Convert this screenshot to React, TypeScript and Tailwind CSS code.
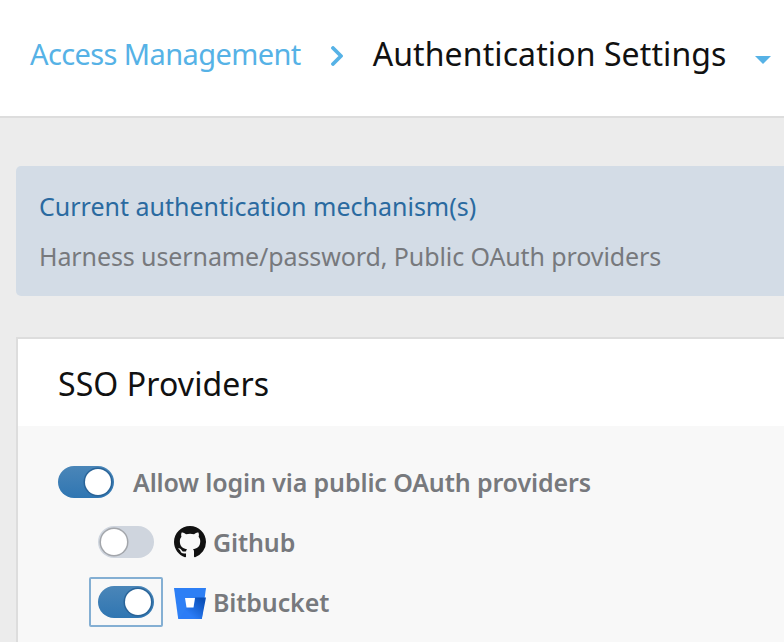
import React from 'react';

const Toggle = ({ on }: { on: boolean }) => (
  <div
    className={`relative h-[32px] w-[56px] shrink-0 rounded-full ${
      on ? 'bg-gradient-to-b from-[#4a86b8] to-[#2f76b2]' : 'bg-[#cfd5de]'
    }`}
  >
    <div
      className={`absolute top-[3px] h-[26px] w-[26px] rounded-full bg-white ${
        on ? 'right-[3px] shadow-[0_0_0_1.5px_#2a6498]' : 'left-[3px] shadow-[0_0_0_1.5px_#a3a6ab]'
      }`}
    />
  </div>
);

const GithubMark = () => (
  <svg viewBox="0 0 16 16" className="h-[32px] w-[32px] shrink-0" fill="#111111">
    <path d="M8 0C3.58 0 0 3.58 0 8c0 3.54 2.29 6.53 5.47 7.59.4.07.55-.17.55-.38 0-.19-.01-.82-.01-1.49-2.01.37-2.53-.49-2.69-.94-.09-.23-.48-.94-.82-1.13-.28-.15-.68-.52-.01-.53.63-.01 1.08.58 1.23.82.72 1.21 1.87.87 2.33.66.07-.52.28-.87.51-1.07-1.78-.2-3.64-.89-3.64-3.95 0-.87.31-1.59.82-2.15-.08-.2-.36-1.02.08-2.12 0 0 .67-.21 2.2.82.64-.18 1.32-.27 2-.27s1.36.09 2 .27c1.53-1.04 2.2-.82 2.2-.82.44 1.1.16 1.92.08 2.12.51.56.82 1.27.82 2.15 0 3.07-1.87 3.75-3.65 3.95.29.25.54.73.54 1.48 0 1.07-.01 1.93-.01 2.2 0 .21.15.46.55.38A8.01 8.01 0 0 0 16 8c0-4.42-3.58-8-8-8z" />
  </svg>
);

const BitbucketMark = () => (
  <svg viewBox="0 0 32 31" className="mt-[3px] h-[31px] w-[32px] shrink-0">
    <defs>
      <linearGradient id="bb" x1="1" y1="0.25" x2="0.4" y2="0.8">
        <stop offset="0" stopColor="#0a4fb8" />
        <stop offset="1" stopColor="#2b7cf6" />
      </linearGradient>
    </defs>
    <path d="M0 0h32l-4.2 31H4.2z" fill="#2d7ff5" />
    <path d="M32 9.5H21l-1.5 10h-7L5 31h22.8z" fill="url(#bb)" />
    <path d="M11 10h10l-1.5 9.5h-7z" fill="#ffffff" />
  </svg>
);

const App: React.FC = () => {
  return (
    <div className="h-[642px] w-[784px] overflow-hidden bg-[#ececec] font-['Noto_Sans',sans-serif]">
      {/* Header */}
      <header className="flex h-[118px] items-center border-b-2 border-[#dddddd] bg-white pb-[8px] pl-[30px]">
        <span className="text-[29px] tracking-[-0.6px] text-[#56b2e6]">Access Management</span>
        <svg viewBox="0 0 12 20" className="ml-[30px] mt-[4px] h-[20px] w-[12px]" fill="none" stroke="#56b2e6" strokeWidth="3.8" strokeLinecap="round" strokeLinejoin="round">
          <path d="M2 2l8 8-8 8" />
        </svg>
        <span className="ml-[30px] text-[32px] tracking-[0.1px] text-[#111111]">Authentication Settings</span>
        <div className="ml-[28px] mt-[12px] h-0 w-0 border-x-[8px] border-t-[8px] border-x-transparent border-t-[#56b2e6]" />
      </header>

      <main className="pl-[16px] pt-[48px]">
        {/* Banner */}
        <div className="flex h-[130px] flex-col rounded-l-[5px] bg-[#d3dce6] pl-[23px] pt-[22px]">
          <div className="text-[25px] leading-[36px] tracking-[0px] text-[#2a6aa0]">Current authentication mechanism(s)</div>
          <div className="mt-[14px] text-[25px] leading-[36px] tracking-[-0.1px] text-[#77797d]">
            Harness username/password, Public OAuth providers
          </div>
        </div>

        {/* SSO card */}
        <section className="mt-[41px] h-[400px] border-l-2 border-t-2 border-[#dddddd] bg-[#f8f8f8]">
          <div className="flex h-[87px] items-center bg-white pl-[40px]">
            <h2 className="pt-[2px] text-[32px] tracking-[0.1px] text-[#111111]">SSO Providers</h2>
          </div>
          <div className="flex flex-col pl-[40px] pt-[40px]">
            <div className="flex h-[32px] items-center gap-[19px]">
              <Toggle on />
              <span className="pt-[2px] text-[25px] font-semibold tracking-[-0.13px] text-[#77797d]">Allow login via public OAuth providers</span>
            </div>
            <div className="ml-[40px] mt-[28px] flex h-[32px] items-center">
              <Toggle on={false} />
              <div className="ml-[20px]"><GithubMark /></div>
              <span className="ml-[7px] pt-[2px] text-[25px] font-semibold tracking-[-0.13px] text-[#77797d]">Github</span>
            </div>
            <div className="ml-[40px] mt-[28px] flex h-[32px] items-center">
              <div className="relative">
                <Toggle on />
                <div className="absolute inset-x-[-9px] inset-y-[-9px] rounded-[2px] border-2 border-[#84afd3]" />
              </div>
              <div className="ml-[20px] flex"><BitbucketMark /></div>
              <span className="ml-[7px] pt-[2px] text-[25px] font-semibold tracking-[-0.13px] text-[#77797d]">Bitbucket</span>
            </div>
          </div>
        </section>
      </main>
    </div>
  );
};

export default App;
